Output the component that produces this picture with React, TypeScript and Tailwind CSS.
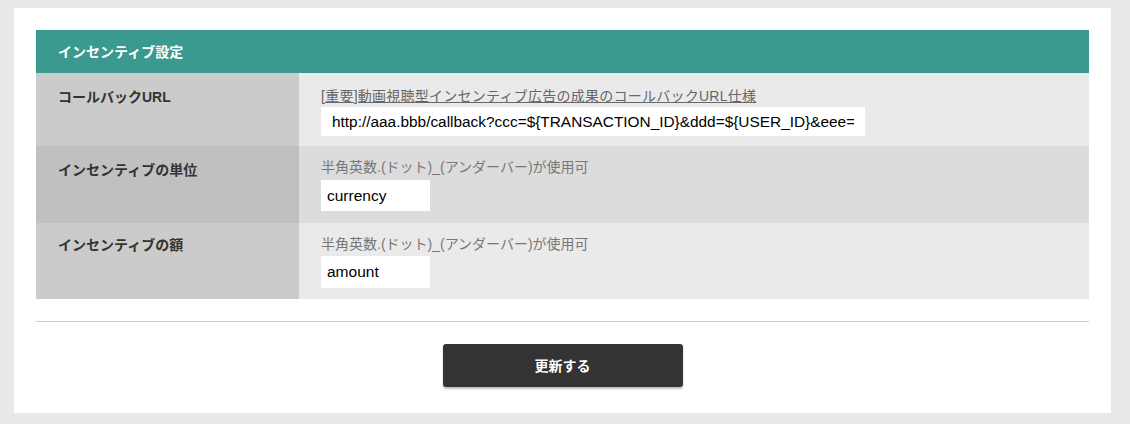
import { useState } from 'react';

const jp = "font-['Liberation_Sans','Noto_Sans_CJK_JP',sans-serif]";

export default function App() {
  const [url, setUrl] = useState('http://aaa.bbb/callback?ccc=${TRANSACTION_ID}&ddd=${USER_ID}&eee=${EEE}');
  const [unit, setUnit] = useState('currency');
  const [amount, setAmount] = useState('amount');

  return (
    <div className={`min-h-[424px] bg-[#e8e8e8] pt-2 px-[14px] pr-[19px] ${jp}`}>
      <div className="bg-white px-[22px] pt-[22px] pb-[26px]">
        <div className="bg-[#3a9a8f] h-[43px] flex items-center px-[22px] text-white text-sm font-bold">
          インセンティブ設定
        </div>

        {/* コールバックURL */}
        <div className="flex h-[73px]">
          <div className="w-[263px] bg-[#cbcbcb] px-[22px] pt-[14px] text-sm font-bold text-[#333]">
            コールバックURL
          </div>
          <div className="flex-1 bg-[#eaeaea] px-[22px] pt-[14px]">
            <a href="#" className="block text-sm leading-[19px] tracking-[0.25px] text-[#666] underline">
              [重要]動画視聴型インセンティブ広告の成果のコールバックURL仕様
            </a>
            <input
              value={url}
              onChange={(e) => setUrl(e.target.value)}
              className="mt-[1px] w-[544px] h-[29px] bg-white px-[11px] text-[15.4px] text-black outline-none font-['Liberation_Sans',sans-serif]"
            />
          </div>
        </div>

        {/* 単位 */}
        <div className="flex h-[77px]">
          <div className="w-[263px] bg-[#c0c0c0] px-[22px] pt-[14px] text-sm font-bold text-[#333]">
            インセンティブの単位
          </div>
          <div className="flex-1 bg-[#dcdcdc] px-[22px] pt-[12px]">
            <div className="text-sm leading-[19px] text-[#777]">半角英数.(ドット)_(アンダーバー)が使用可</div>
            <input
              value={unit}
              onChange={(e) => setUnit(e.target.value)}
              className="mt-[3px] w-[109px] h-[31px] bg-white px-[6px] text-[15.5px] text-black outline-none font-['Liberation_Sans',sans-serif]"
            />
          </div>
        </div>

        {/* 額 */}
        <div className="flex h-[76px]">
          <div className="w-[263px] bg-[#cbcbcb] px-[22px] pt-[12px] text-sm font-bold text-[#333]">
            インセンティブの額
          </div>
          <div className="flex-1 bg-[#eaeaea] px-[22px] pt-[12px]">
            <div className="text-sm leading-[19px] text-[#777]">半角英数.(ドット)_(アンダーバー)が使用可</div>
            <input
              value={amount}
              onChange={(e) => setAmount(e.target.value)}
              className="mt-[2px] w-[109px] h-[32px] bg-white px-[6px] text-[15.5px] text-black outline-none font-['Liberation_Sans',sans-serif]"
            />
          </div>
        </div>

        <div className="mt-[22px] border-t border-[#cccccc]" />

        <div className="flex justify-center pt-[22px]">
          <button className="w-[240px] h-[43px] rounded-[3px] bg-[#333] text-white text-sm font-bold shadow-[0_2px_2px_rgba(0,0,0,0.25)]">
            更新する
          </button>
        </div>
      </div>
    </div>
  );
}
